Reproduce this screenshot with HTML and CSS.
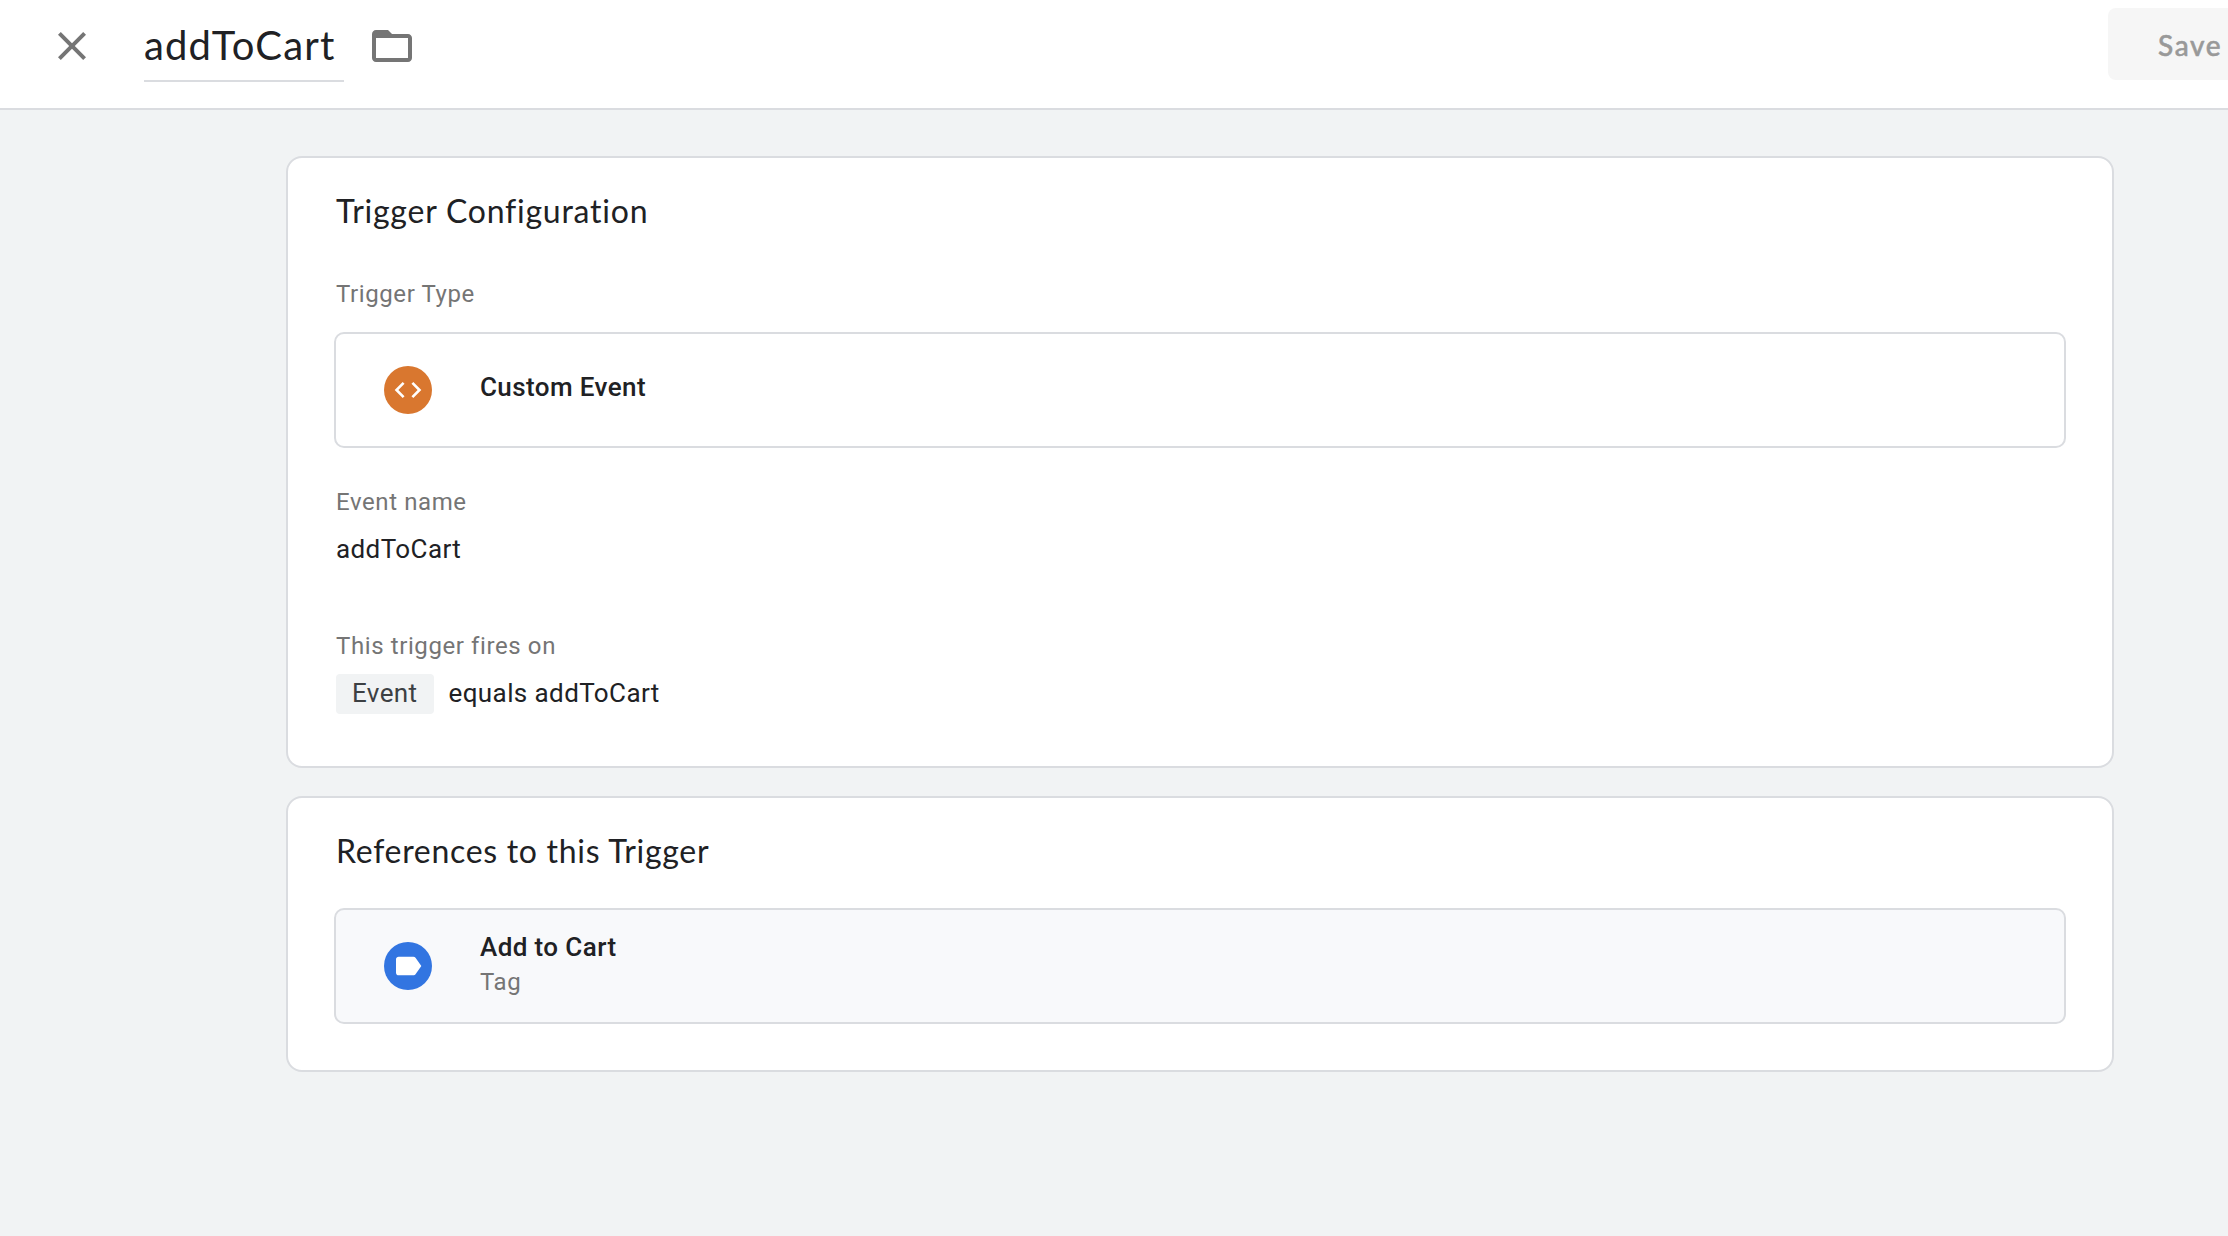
FILE: index.html
```html
<!DOCTYPE html>
<html lang="en">
<head>
<meta charset="utf-8">
<title>addToCart</title>
<link rel="stylesheet" href="styles.css">
</head>
<body>
<header class="topbar">
  <svg class="icon close" viewBox="0 0 24 24"><path d="M19 6.41L17.59 5 12 10.59 6.41 5 5 6.41 10.59 12 5 17.59 6.41 19 12 13.41 17.59 19 19 17.59 13.41 12z"/></svg>
  <div class="name">addToCart</div>
  <svg class="icon folder" viewBox="0 0 24 24"><path d="M20 6h-8l-2-2H4c-1.1 0-1.99.9-1.99 2L2 18c0 1.1.9 2 2 2h16c1.1 0 2-.9 2-2V8c0-1.1-.9-2-2-2zm0 12H4V8h16v10z"/></svg>
  <button class="save" disabled>Save</button>
</header>
<main class="content">
  <section class="card config">
    <h2 class="heading">Trigger Configuration</h2>
    <div class="label type-label">Trigger Type</div>
    <div class="box">
      <span class="badge orange"><svg viewBox="0 0 24 24"><path d="M9.4 16.6L4.8 12l4.6-4.6L8 6l-6 6 6 6 1.4-1.4zm5.2 0l4.6-4.6-4.6-4.6L16 6l6 6-6 6-1.4-1.4z"/></svg></span>
      <div class="box-text"><div class="box-title">Custom Event</div></div>
    </div>
    <div class="label event-label">Event name</div>
    <div class="value">addToCart</div>
    <div class="label fires-label">This trigger fires on</div>
    <div class="condition"><span class="chip">Event</span><span class="rule">equals addToCart</span></div>
  </section>
  <section class="card references">
    <h2 class="heading">References to this Trigger</h2>
    <div class="box tinted">
      <span class="badge blue"><svg viewBox="0 0 24 24"><path d="M17.63 5.84C17.27 5.33 16.67 5 16 5L5 5.01C3.9 5.01 3 5.9 3 7v10c0 1.1.9 1.99 2 1.99L16 19c.67 0 1.27-.33 1.63-.84L22 12l-4.37-6.16z"/></svg></span>
      <div class="box-text"><div class="box-title">Add to Cart</div><div class="label">Tag</div></div>
    </div>
  </section>
</main>
</body>
</html>
```
FILE: styles.css
```css
* { box-sizing: border-box; }
html { height: 100%; }
body {
  margin: 0;
  min-height: 100%;
  overflow: hidden;
  background: #f1f3f4;
  color: #202124;
  font-family: Roboto, sans-serif;
  font-size: 26px;
  letter-spacing: 0.4px;
}
svg { display: block; flex: none; }

.topbar {
  display: flex;
  align-items: flex-start;
  height: 110px;
  padding: 8px 0 0 48px;
  background: #fff;
  border-bottom: 2px solid #dadce0;
}
.icon { width: 48px; height: 48px; margin-top: 14px; fill: #757575; }
.name {
  width: 200px;
  height: 74px;
  margin: 0 24px 0 48px;
  border-bottom: 2px solid #dadce0;
  font: 400 40px/75px Lato, sans-serif;
  letter-spacing: 1.17px;
  white-space: nowrap;
}
.save {
  width: 176px;
  height: 72px;
  margin: 0 -56px 0 auto;
  padding: 2px 0 0 50px;
  border: 0;
  border-radius: 8px;
  background: #f6f6f6;
  color: #999;
  font: 500 28px/70px Lato, sans-serif;
  letter-spacing: 1.6px;
  text-align: left;
  -webkit-text-stroke: 0.5px #999;
}

.content { padding: 46px 114px 0 286px; }
.card {
  width: 1828px;
  padding: 29px 48px 0;
  background: #fff;
  border: 2px solid #dadce0;
  border-radius: 16px;
}
.config { padding-bottom: 52px; }
.references { margin-top: 28px; padding-bottom: 46px; }
.heading {
  margin: 0;
  font: 400 32px/48px Lato, sans-serif;
  letter-spacing: 0.7px;
}
.config .heading { letter-spacing: 0.77px; }
.label {
  color: #757575;
  font-size: 24px;
  line-height: 32px;
  letter-spacing: 0.6px;
}
.type-label { margin-top: 43px; }
.event-label { margin-top: 38px; }
.fires-label { margin-top: 61px; }
.value { margin-top: 11px; line-height: 40px; }

.box {
  display: flex;
  align-items: center;
  height: 116px;
  margin: 22px -2px 0;
  padding-left: 48px;
  border: 2px solid #dadce0;
  border-radius: 10px;
}
.references .box { margin-top: 33px; }
.tinted { background: #f8f9fb; }
.badge {
  display: flex;
  align-items: center;
  justify-content: center;
  width: 48px;
  height: 48px;
  margin-right: 48px;
  border-radius: 50%;
}
.badge svg { width: 32px; height: 32px; fill: #fff; }
.orange { background: #d9772f; }
.blue { background: #3275e1; }
.box-text { padding-bottom: 4px; }
.box-title { margin-bottom: 2px; line-height: 34px; font-weight: 500; }

.condition { display: flex; gap: 14.5px; margin-top: 12px; line-height: 38px; }
.chip {
  width: 98px;
  height: 40px;
  padding-left: 16px;
  border-radius: 4px;
  background: #f1f3f4;
  color: #3c4043;
}
```
